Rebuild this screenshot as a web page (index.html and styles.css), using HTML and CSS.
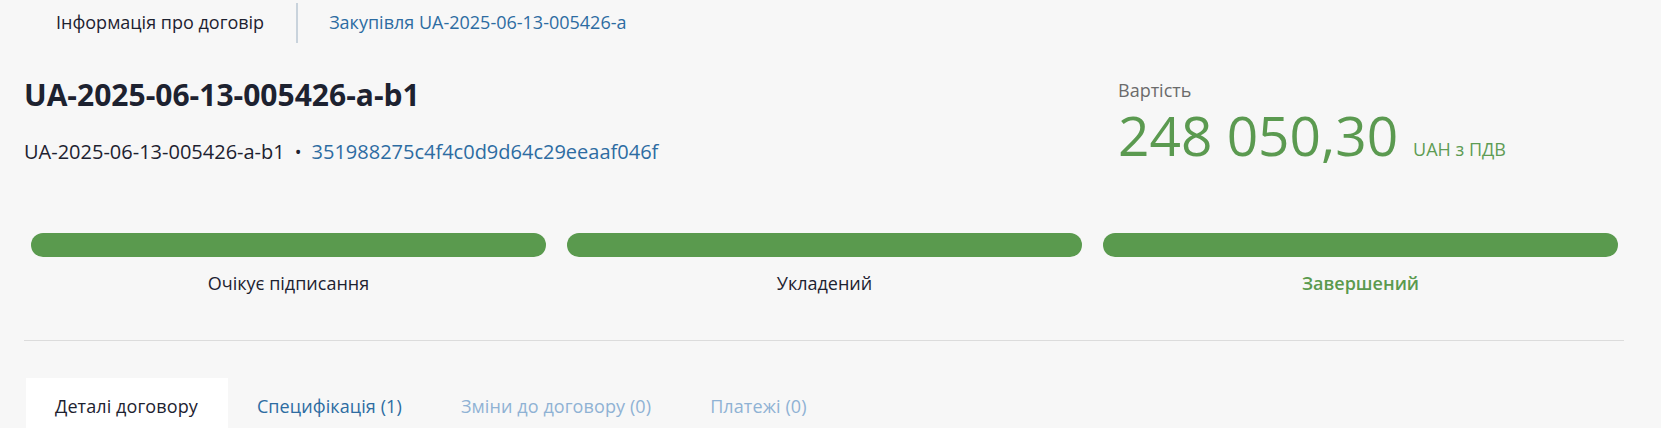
FILE: index.html
```html
<!DOCTYPE html>
<html lang="uk">
<head>
<meta charset="utf-8">
<title>Інформація про договір</title>
<link rel="stylesheet" href="styles.css">
</head>
<body>
<div class="page">
  <nav class="topnav">
    <span class="topnav-item topnav-item--active">Інформація про договір</span>
    <a class="topnav-item topnav-item--link" href="#">Закупівля UA-2025-06-13-005426-a</a>
  </nav>

  <header class="head">
    <div class="head-main">
      <h1 class="title">UA-2025-06-13-005426-a-b1</h1>
      <div class="ids">
        <span class="ids-code">UA-2025-06-13-005426-a-b1</span>
        <span class="ids-dot">•</span>
        <a class="ids-hash" href="#">351988275c4f4c0d9d64c29eeaaf046f</a>
      </div>
    </div>
    <div class="head-price">
      <div class="price-label">Вартість</div>
      <div class="price-row">
        <span class="price-value">248 050,30</span>
        <span class="price-unit">UAH з ПДВ</span>
      </div>
    </div>
  </header>

  <div class="steps">
    <div class="step">
      <div class="step-bar"></div>
      <div class="step-label">Очікує підписання</div>
    </div>
    <div class="step">
      <div class="step-bar"></div>
      <div class="step-label">Укладений</div>
    </div>
    <div class="step">
      <div class="step-bar"></div>
      <div class="step-label step-label--current">Завершений</div>
    </div>
  </div>

  <hr class="sep">

  <div class="tabs">
    <span class="tab tab--active">Деталі договору</span>
    <a class="tab tab--link" href="#">Специфікація (1)</a>
    <span class="tab tab--disabled">Зміни до договору (0)</span>
    <span class="tab tab--disabled">Платежі (0)</span>
  </div>
</div>
</body>
</html>
```

FILE: styles.css
```css
* { box-sizing: border-box; }

html, body {
  margin: 0;
  padding: 0;
  background: #f7f7f7;
  font-family: "Open Sans", "Noto Sans", sans-serif;
  color: #1d2230;
  overflow: hidden;
}

a { text-decoration: none; }

.page {
  width: 1600px;
  margin-left: 24px;
}

/* top navigation */
.topnav {
  display: flex;
  align-items: stretch;
  margin-top: 3px;
  height: 40px;
}

.topnav-item {
  display: flex;
  align-items: center;
  padding: 0 32px 2px;
  font-size: 18px;
  line-height: 24px;
}

.topnav-item--active {
  color: #1d2230;
  border-right: 2px solid #c9d3dc;
}

.topnav-item--link {
  color: #2d6ca2;
  padding-left: 31px;
}

/* header */
.head {
  display: grid;
  grid-template-columns: 1fr 506px;
  margin-top: 34px;
}

.title {
  margin: 0;
  font-size: 30px;
  line-height: 36px;
  font-weight: 700;
  color: #1d2230;
}

.ids {
  margin-top: 26px;
  font-size: 20px;
  line-height: 26px;
  display: flex;
  gap: 10px;
  align-items: baseline;
}

.ids-code { color: #1d2230; }
.ids-dot { color: #1d2230; font-size: 18px; }
.ids-hash { color: #2d6ca2; }

.head-price {
  padding-top: 1px;
}

.price-label {
  font-size: 18px;
  line-height: 22px;
  padding-top: 1px;
  color: #6b6b6b;
}

.price-row {
  display: flex;
  align-items: baseline;
  gap: 15px;
  margin-top: 4px;
}

.price-value {
  display: inline-block;
  font-size: 55px;
  line-height: 60px;
  font-weight: 400;
  color: #5b9a50;
}

.price-unit {
  display: inline-block;
  font-size: 18px;
  line-height: 22px;
  font-weight: 400;
  color: #5e9c54;
}

/* steps */
.steps {
  display: grid;
  grid-template-columns: repeat(3, 1fr);
  gap: 21px;
  padding: 0 6px 0 7px;
  margin-top: 68px;
}

.step {
  display: flex;
  flex-direction: column;
  align-items: center;
}

.step-bar {
  width: 100%;
  height: 24px;
  border-radius: 12px;
  background: #5a9a4e;
}

.step-label {
  margin-top: 14px;
  font-size: 18px;
  line-height: 24px;
  font-weight: 500;
  color: #1d2230;
}

.step-label--current {
  color: #5a9a4e;
  font-weight: 600;
}

/* separator */
.sep {
  margin: 45px 0 0;
  border: 0;
  border-top: 1px solid #dcdcdc;
  height: 0;
}

/* tabs */
.tabs {
  display: flex;
  margin-top: 37px;
  padding-left: 2px;
}

.tab {
  display: block;
  padding: 16px 30px 20px 29px;
  font-size: 18px;
  line-height: 24px;
  letter-spacing: 0.1px;
}

.tab--active {
  background: #ffffff;
  color: #1d2230;
}

.tab--link { color: #2d6ca2; }
.tab--disabled { color: #8fb2d4; }
```
